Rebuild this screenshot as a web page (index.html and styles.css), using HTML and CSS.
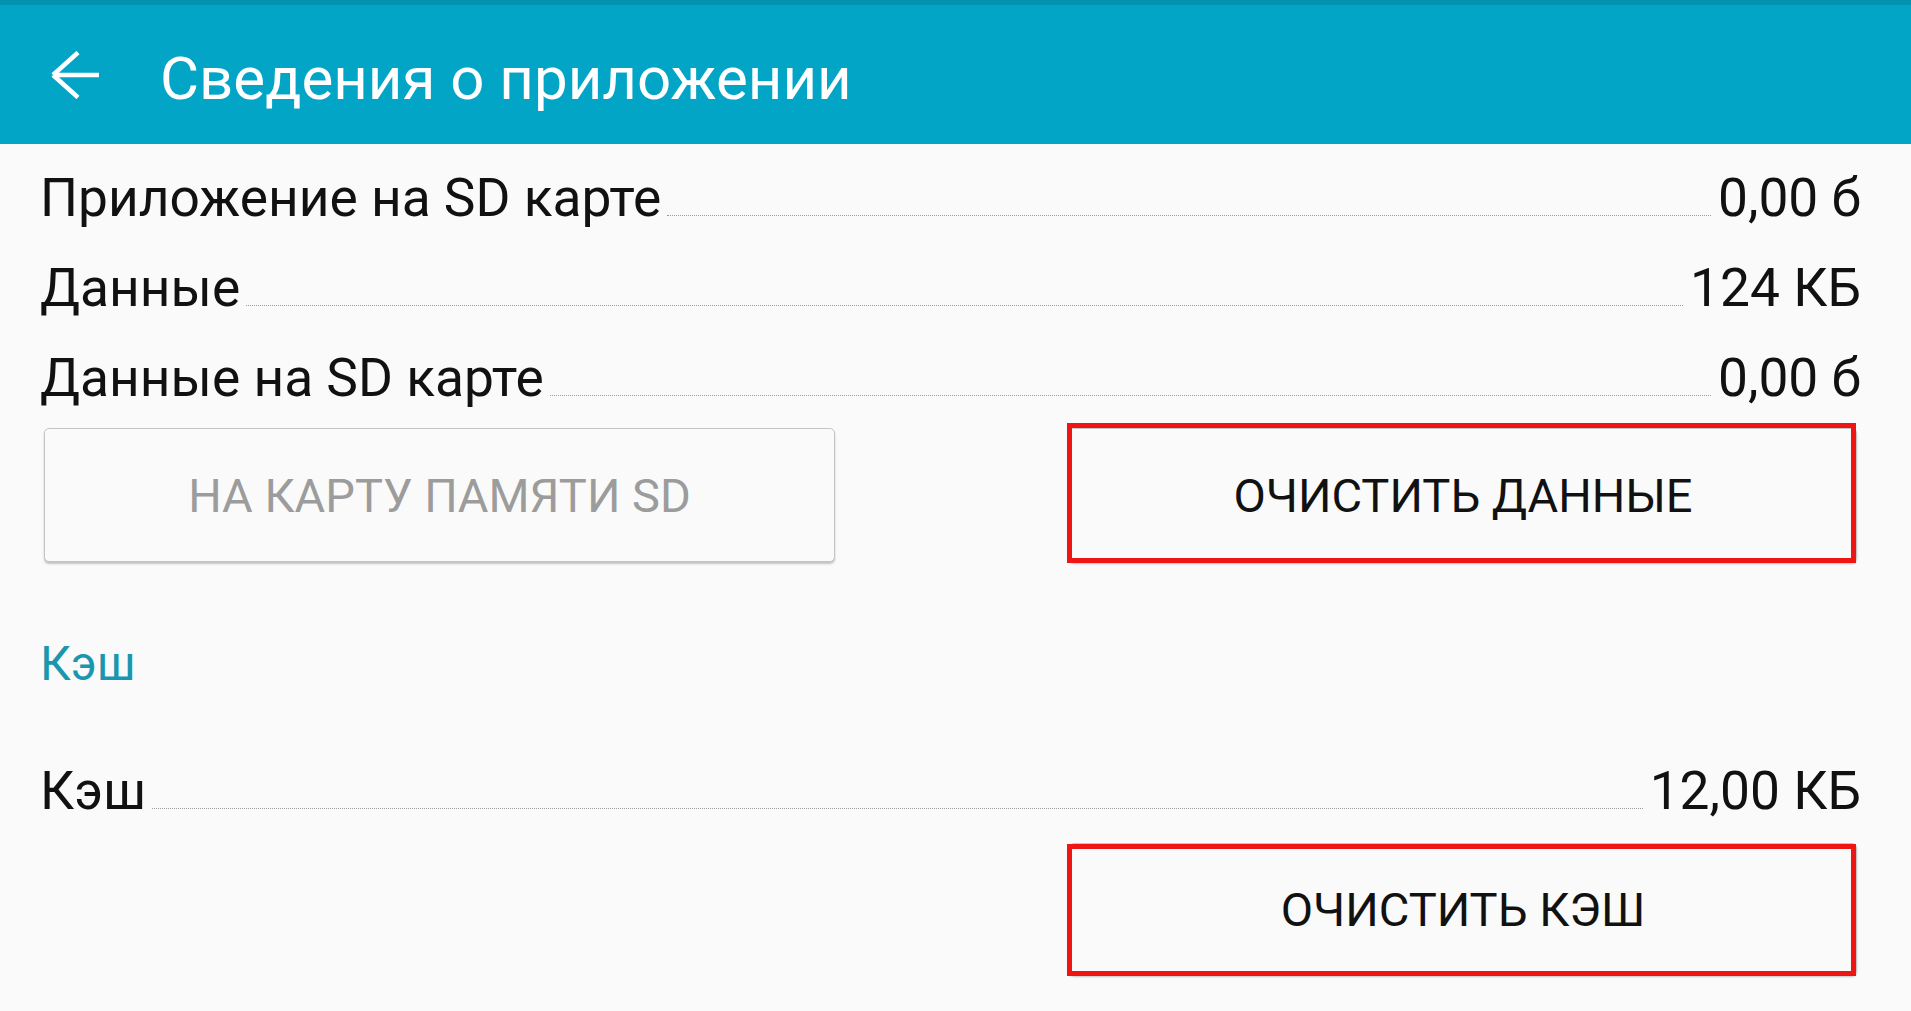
FILE: index.html
```html
<!DOCTYPE html>
<html lang="ru">
<head>
<meta charset="utf-8">
<title>Сведения о приложении</title>
<link rel="stylesheet" href="styles.css">
</head>
<body>
<header class="appbar">
  <svg class="back" width="48" height="48" viewBox="0 0 48 48" aria-hidden="true">
    <path d="M2 24 L27 1.5 M2 24 L27 46.5 M2 24 H48" fill="none" stroke="#ffffff" stroke-width="4.5" stroke-linecap="butt" stroke-linejoin="miter"/>
  </svg>
  <h1 class="title">Сведения о приложении</h1>
</header>
<main class="content">
  <div class="row"><span class="label">Приложение на SD карте</span><span class="leader"></span><span class="value">0,00 б</span></div>
  <div class="row"><span class="label">Данные</span><span class="leader"></span><span class="value">124 КБ</span></div>
  <div class="row"><span class="label">Данные на SD карте</span><span class="leader"></span><span class="value">0,00 б</span></div>
  <div class="buttons">
    <button class="btn btn-disabled" type="button">НА КАРТУ ПАМЯТИ SD</button>
    <button class="btn btn-marked" type="button">ОЧИСТИТЬ ДАННЫЕ</button>
  </div>
  <h2 class="section">Кэш</h2>
  <div class="row"><span class="label">Кэш</span><span class="leader"></span><span class="value">12,00 КБ</span></div>
  <div class="buttons buttons-cache">
    <span class="spacer"></span>
    <button class="btn btn-marked btn-cache" type="button">ОЧИСТИТЬ КЭШ</button>
  </div>
</main>
</body>
</html>
```
FILE: styles.css
```css
* { box-sizing: border-box; }
html, body { margin: 0; padding: 0; }
body {
  background: #fafafa;
  font-family: Roboto, "Noto Sans", "Liberation Sans", sans-serif;
  color: #111111;
  width: 1911px;
  height: 1011px;
  overflow: hidden;
}
.appbar {
  height: 144px;
  background: #02a5c6;
  border-top: 5px solid #0092ae;
  display: flex;
  align-items: center;
  padding-left: 51px;
}
.back { display: block; flex: none; }
.title {
  margin: 8px 0 0 61px;
  font-size: 60px;
  font-weight: 400;
  color: #ffffff;
  line-height: 70px;
  letter-spacing: 0;
}
.content {
  padding: 9px 50px 0 40px;
}
.row {
  display: flex;
  align-items: baseline;
  height: 90px;
  line-height: 90px;
  font-size: 53.3px;
  color: #111111;
}
.label { flex: none; white-space: nowrap; }
.value { flex: none; white-space: nowrap; }
.leader {
  flex: 1;
  height: 0;
  margin: 0 7px 0 6px;
  border-bottom: 1px dotted #9a9a9a;
}
.buttons {
  display: grid;
  grid-template-columns: 791px 1fr;
  column-gap: 234px;
  padding-left: 4px;
  margin-top: 5px;
}
.btn {
  position: relative;
  height: 134px;
  margin: 0;
  padding: 0;
  font-family: Roboto, "Noto Sans", "Liberation Sans", sans-serif;
  font-size: 47px;
  font-weight: 400;
  background: #fafafa;
  border: 1px solid #c4c4c4;
  border-radius: 5px;
  box-shadow: 0 2px 2px rgba(0, 0, 0, 0.22);
  color: #111111;
}
.btn-disabled { color: #9c9c9c; }
.btn-marked { margin-right: 4px; }
.btn-marked::after {
  content: "";
  position: absolute;
  top: -6px;
  left: -3px;
  right: 0;
  bottom: -2px;
  border: 5px solid #ee1515;
}
.section {
  margin: 72px 0 52px 0;
  font-size: 48px;
  font-weight: 400;
  line-height: 60px;
  color: #1a97ae;
}
.buttons-cache { margin-top: 7px; }
.btn-cache { height: 132px; }
.btn-cache::after { top: 0; }
```
